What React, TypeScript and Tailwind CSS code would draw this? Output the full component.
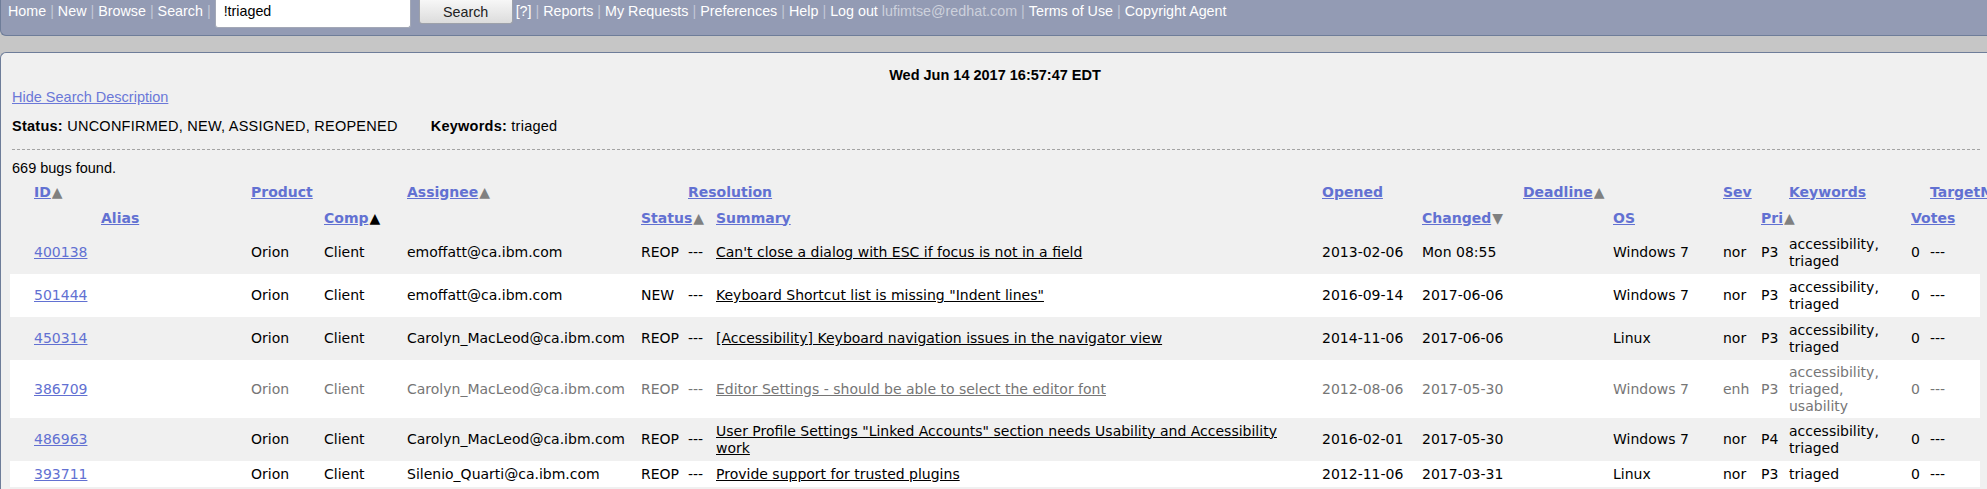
import React from 'react';

type Bug = {
    id: string;
    assignee: string;
    status: string;
    summary: string;
    opened: string;
    changed: string;
    os: string;
    sev: string;
    pri: string;
    keywords: string;
    muted?: boolean;
};

const BUGS: Bug[] = [
    { id: '400138', assignee: 'emoffatt@ca.ibm.com', status: 'REOP', summary: "Can't close a dialog with ESC if focus is not in a field", opened: '2013-02-06', changed: 'Mon 08:55', os: 'Windows 7', sev: 'nor', pri: 'P3', keywords: 'accessibility, triaged' },
    { id: '501444', assignee: 'emoffatt@ca.ibm.com', status: 'NEW', summary: 'Keyboard Shortcut list is missing "Indent lines"', opened: '2016-09-14', changed: '2017-06-06', os: 'Windows 7', sev: 'nor', pri: 'P3', keywords: 'accessibility, triaged' },
    { id: '450314', assignee: 'Carolyn_MacLeod@ca.ibm.com', status: 'REOP', summary: '[Accessibility] Keyboard navigation issues in the navigator view', opened: '2014-11-06', changed: '2017-06-06', os: 'Linux', sev: 'nor', pri: 'P3', keywords: 'accessibility, triaged' },
    { id: '386709', assignee: 'Carolyn_MacLeod@ca.ibm.com', status: 'REOP', summary: 'Editor Settings - should be able to select the editor font', opened: '2012-08-06', changed: '2017-05-30', os: 'Windows 7', sev: 'enh', pri: 'P3', keywords: 'accessibility, triaged, usability', muted: true },
    { id: '486963', assignee: 'Carolyn_MacLeod@ca.ibm.com', status: 'REOP', summary: 'User Profile Settings "Linked Accounts" section needs Usability and Accessibility work', opened: '2016-02-01', changed: '2017-05-30', os: 'Windows 7', sev: 'nor', pri: 'P4', keywords: 'accessibility, triaged' },
    { id: '393711', assignee: 'Silenio_Quarti@ca.ibm.com', status: 'REOP', summary: 'Provide support for trusted plugins', opened: '2012-11-06', changed: '2017-03-31', os: 'Linux', sev: 'nor', pri: 'P3', keywords: 'triaged' },
];

const GRID = 'grid grid-cols-[24px_67px_150px_73px_83px_234px_47px_28px_606px_100px_101px_90px_110px_38px_28px_122px_19px_120px]';

function Sep() {
    return <span className="text-[#c2c7d6] px-[4px]">|</span>;
}

function Arrow({ dir = 'up', dark }: { dir?: 'up' | 'down'; dark?: boolean }) {
    return (
        <span className={`ml-[1px] text-[14px] no-underline ${dark ? 'text-black' : 'text-[#808080]'}`}>
            {dir === 'up' ? '▲' : '▼'}
        </span>
    );
}

function Head({ label, col, arrow }: { label: string; col: string; arrow?: React.ReactNode }) {
    return (
        <div className={`${col} whitespace-nowrap`}>
            <a href="#" className="underline text-[#6271d2] font-bold">{label}</a>
            {arrow}
        </div>
    );
}

export default function App() {
    return (
        <div className="w-full h-screen overflow-hidden bg-[#c6c6c6] flex flex-col font-['Liberation_Sans',Arial,sans-serif] text-[14.5px] leading-[16px]">
            {/* Top nav bar */}
            <div className="h-[36px] shrink-0 flex items-start bg-[#939bb4] border-l border-b border-[#6e7d99] rounded-bl-[6px] text-white text-[14.3px]">
                <div className="pt-[3px] pl-[7px] whitespace-nowrap">
                    Home<Sep />New<Sep />Browse<Sep />Search<Sep />
                </div>
                <div className="w-[196px] h-[28px] bg-white border border-t-0 border-[#a3a8b6] rounded-b-[3px] pl-[8px] pt-[3px] text-black">
                    !triaged
                </div>
                <button className="ml-[8px] w-[94px] h-[24px] bg-linear-to-b from-[#f7f7f7] to-[#dcdcdc] border border-t-0 border-[#9da1aa] rounded-b-[3px] text-[#222] text-[14.3px]">
                    Search
                </button>
                <div className="ml-[3px] pt-[3px] whitespace-nowrap">
                    [?]<Sep />Reports<Sep />My Requests<Sep />Preferences<Sep />Help<Sep />Log out <span className="text-[#cdd1dc]">lufimtse@redhat.com</span><Sep />Terms of Use<Sep />Copyright Agent
                </div>
            </div>

            {/* Main panel */}
            <div className="mt-[16px] flex-1 bg-[#f0f0f0] border-t border-l border-[#6e7d99] rounded-tl-[6px] pl-[9px] pr-[7px] pt-[14px] text-black">
                <div className="text-center font-bold">Wed Jun 14 2017 16:57:47 EDT</div>
                <div className="mt-[6px] pl-[2px]">
                    <a href="#" className="underline text-[#6b78d8]">Hide Search Description</a>
                </div>
                <div className="mt-[13px] pl-[2px] flex whitespace-nowrap tracking-[0.25px]">
                    <span><b>Status:</b> UNCONFIRMED, NEW, ASSIGNED, REOPENED</span>
                    <span className="ml-[33px]"><b>Keywords:</b> triaged</span>
                </div>
                <div className="mt-[15px] ml-[2px] border-t border-dashed border-[#a3a3a3]" />
                <div className="mt-[10px] pl-[2px]">669 bugs found.</div>

                {/* Bug list */}
                <div className="mt-[3px] font-['DejaVu_Sans',sans-serif] text-[14px] leading-[17px]">
                    <div className={`${GRID} h-[26px] items-center`}>
                        <Head label="ID" col="col-start-[2] col-span-2" arrow={<Arrow />} />
                        <Head label="Product" col="col-start-[4] col-span-2" />
                        <Head label="Assignee" col="col-start-[6] col-span-2" arrow={<Arrow />} />
                        <Head label="Resolution" col="col-start-[8] col-span-2" />
                        <Head label="Opened" col="col-start-[10] col-span-2" />
                        <Head label="Deadline" col="col-start-[12] col-span-2" arrow={<Arrow />} />
                        <Head label="Sev" col="col-start-[14] col-span-2" />
                        <Head label="Keywords" col="col-start-[16] col-span-2" />
                        <Head label="TargetMilestone" col="col-start-[18]" />
                    </div>
                    <div className={`${GRID} h-[26px] items-center`}>
                        <Head label="Alias" col="col-start-[3] col-span-2" />
                        <Head label="Comp" col="col-start-[5] col-span-2" arrow={<Arrow dark />} />
                        <Head label="Status" col="col-start-[7] col-span-2" arrow={<Arrow />} />
                        <Head label="Summary" col="col-start-[9] col-span-2" />
                        <Head label="Changed" col="col-start-[11] col-span-2" arrow={<Arrow dir="down" />} />
                        <Head label="OS" col="col-start-[13] col-span-2" />
                        <Head label="Pri" col="col-start-[15] col-span-2" arrow={<Arrow />} />
                        <Head label="Votes" col="col-start-[17] col-span-2" />
                    </div>

                    {BUGS.map((bug, i) => {
                        const tone = bug.muted ? 'text-[#767676]' : 'text-black';
                        return (
                            <div
                                key={bug.id}
                                className={`${GRID} items-center ${bug.muted ? 'py-[3.5px]' : 'py-[4.5px]'} ${i % 2 === 1 ? 'bg-white' : 'bg-[#f0f0f0]'} ${tone}`}
                            >
                                <div />
                                <div><a href="#" className="underline text-[#6271d2]">{bug.id}</a></div>
                                <div />
                                <div className="whitespace-nowrap">Orion</div>
                                <div className="whitespace-nowrap">Client</div>
                                <div className="whitespace-nowrap">{bug.assignee}</div>
                                <div className="whitespace-nowrap">{bug.status}</div>
                                <div className="whitespace-nowrap">---</div>
                                <div className="pr-[20px]">
                                    <a href="#" className={`underline ${tone}`}>{bug.summary}</a>
                                </div>
                                <div className="whitespace-nowrap">{bug.opened}</div>
                                <div className="whitespace-nowrap">{bug.changed}</div>
                                <div />
                                <div className="whitespace-nowrap">{bug.os}</div>
                                <div className="whitespace-nowrap">{bug.sev}</div>
                                <div className="whitespace-nowrap">{bug.pri}</div>
                                <div className="pr-[16px]">{bug.keywords}</div>
                                <div className="whitespace-nowrap">0</div>
                                <div className="whitespace-nowrap">---</div>
                            </div>
                        );
                    })}
                </div>
            </div>
        </div>
    );
}
